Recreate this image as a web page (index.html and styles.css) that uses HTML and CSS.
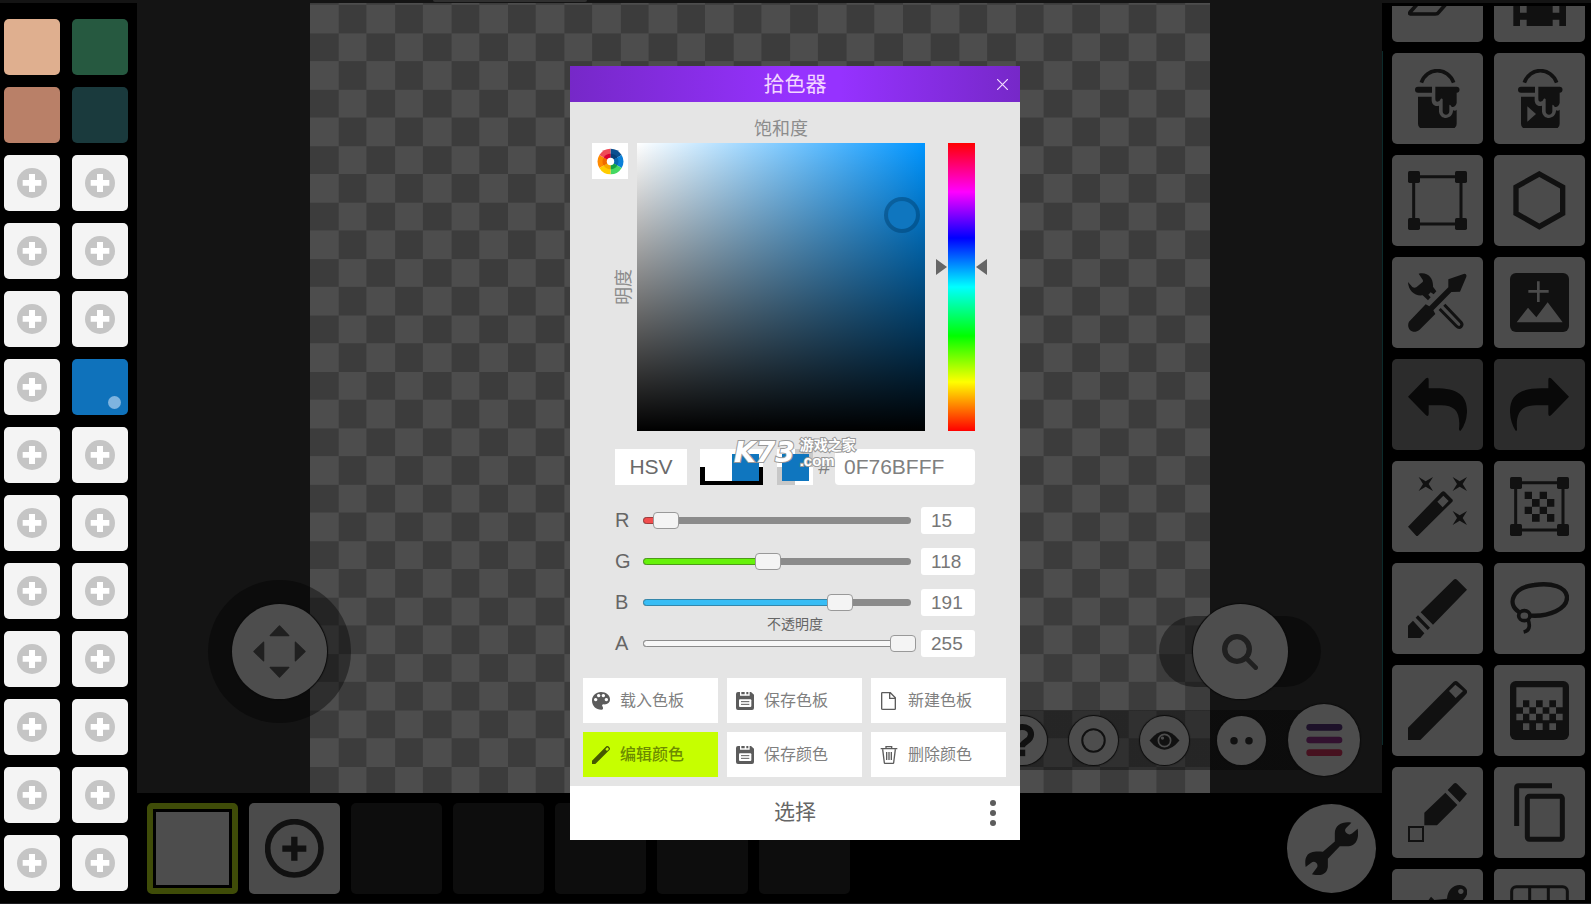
FILE: index.html
```html
<!DOCTYPE html>
<html lang="zh-CN">
<head>
<meta charset="utf-8">
<title>拾色器</title>
<link rel="stylesheet" href="styles.css">
</head>
<body>
<svg class="defs" aria-hidden="true">
  <symbol id="plus" viewBox="0 0 90 90"><circle cx="45" cy="45" r="45" fill="#c5c5c5"/><path d="M36 18h18v18h19v17H54v19H36V53H17V36h19z" fill="#fff"/></symbol>
  <symbol id="corners" viewBox="0 0 177 177"><path d="M17 17h142v142H17z" fill="none" stroke="#111" stroke-width="9"/><g fill="#111"><rect width="36" height="36" rx="5"/><rect x="141" width="36" height="36" rx="5"/><rect y="141" width="36" height="36" rx="5"/><rect x="141" y="141" width="36" height="36" rx="5"/></g></symbol>
  <symbol id="bucket" viewBox="0 0 177 177"><path d="M40 41C56-7 120-7 137 41" fill="none" stroke="#111" stroke-width="11"/><path d="M30 53h42v18H30a9 9 0 0 1 0-18z"/><path d="M82 53h63a9 9 0 0 1 1 18v31c-3 14-15 14-17 9-3-5-5-4-5 0v16c0 14-20 14-20 0V91c-2-4-6-3-8 3-7 8-14 4-14-4z"/><path d="M30 83h41v12c2 14 12 18 22 15v18c4 27 42 24 42-4 5 2 9 1 11-2v42q0 15-15 15H45q-15 0-15-15z"/></symbol>
  <symbol id="floppy" viewBox="0 0 54 54"><path d="M6 0h6v11h29V0h4l9 8v40q0 6-6 6H6q-6 0-6-6V6q0-6 6-6zM16 0h10v7H16zM31 0h6v7h-6z" fill="#5c5c5c"/><rect x="9" y="22" width="37" height="23" rx="3" fill="#fff"/><path d="M15 29h25M15 37h25" stroke="#5c5c5c" stroke-width="3"/></symbol>
</svg>

<div class="app">
  <div class="topline"><span class="tab"></span></div>

  <aside class="palette">
    <button class="swatch peach" aria-label="颜色"></button><button class="swatch green" aria-label="颜色"></button>
    <button class="swatch clay" aria-label="颜色"></button><button class="swatch teal" aria-label="颜色"></button>
    <button class="swatch" aria-label="添加"><svg><use href="#plus"/></svg></button><button class="swatch" aria-label="添加"><svg><use href="#plus"/></svg></button>
    <button class="swatch" aria-label="添加"><svg><use href="#plus"/></svg></button><button class="swatch" aria-label="添加"><svg><use href="#plus"/></svg></button>
    <button class="swatch" aria-label="添加"><svg><use href="#plus"/></svg></button><button class="swatch" aria-label="添加"><svg><use href="#plus"/></svg></button>
    <button class="swatch" aria-label="添加"><svg><use href="#plus"/></svg></button><button class="swatch blue" aria-label="颜色"></button>
    <button class="swatch" aria-label="添加"><svg><use href="#plus"/></svg></button><button class="swatch" aria-label="添加"><svg><use href="#plus"/></svg></button>
    <button class="swatch" aria-label="添加"><svg><use href="#plus"/></svg></button><button class="swatch" aria-label="添加"><svg><use href="#plus"/></svg></button>
    <button class="swatch" aria-label="添加"><svg><use href="#plus"/></svg></button><button class="swatch" aria-label="添加"><svg><use href="#plus"/></svg></button>
    <button class="swatch" aria-label="添加"><svg><use href="#plus"/></svg></button><button class="swatch" aria-label="添加"><svg><use href="#plus"/></svg></button>
    <button class="swatch" aria-label="添加"><svg><use href="#plus"/></svg></button><button class="swatch" aria-label="添加"><svg><use href="#plus"/></svg></button>
    <button class="swatch" aria-label="添加"><svg><use href="#plus"/></svg></button><button class="swatch" aria-label="添加"><svg><use href="#plus"/></svg></button>
    <button class="swatch" aria-label="添加"><svg><use href="#plus"/></svg></button><button class="swatch" aria-label="添加"><svg><use href="#plus"/></svg></button>
  </aside>

  <main class="stage">
    <svg class="canvas" viewBox="0 0 32 28" preserveAspectRatio="xMinYMin slice" shape-rendering="crispEdges">
      <defs><pattern id="checker" y="0.06" width="2" height="2" patternUnits="userSpaceOnUse"><path fill="#4d4d4d" d="M0 0h2v2H0z"/><path fill="#3c3c3c" d="M1 0h1v1H1zM0 1h1v1H0z"/></pattern></defs>
      <rect width="32" height="40" fill="url(#checker)"/>
    </svg>
    <div class="joystick">
      <button class="knob" aria-label="移动"><svg viewBox="0 0 160 160" width="53" height="53" fill="#202020" stroke="#202020" stroke-width="4" stroke-linejoin="round"><path d="M80 3l28 29H52zM80 157l28-29H52zM3 80l29-28v56zM157 80l-29-28v56z"/></svg></button>
    </div>
    <div class="zoombar">
      <button class="knob" aria-label="缩放"><svg viewBox="0 0 108 108" width="36" height="36" fill="none" stroke="#202020"><circle cx="45" cy="45" r="37" stroke-width="16"/><path d="M74 74l27 27" stroke-width="14" stroke-linecap="round"/></svg></button>
    </div>
    <div class="quickbar">
      <button class="round" aria-label="帮助"><svg viewBox="0 0 144 144"><path d="M43 56c0-30 54-32 54-2 0 22-27 20-27 38" fill="none" stroke="#111" stroke-width="18"/><path d="M61 99h19v19H61z" fill="#111"/></svg></button>
      <button class="round" aria-label="圆形"><svg viewBox="0 0 144 144"><circle cx="72" cy="72" r="33" fill="none" stroke="#111" stroke-width="6"/></svg></button>
      <button class="round" aria-label="预览"><svg viewBox="0 0 144 144"><path d="M28 72q44-54 88 0-44 54-88 0z" fill="#111"/><circle cx="72" cy="72" r="18" fill="none" stroke="#4d4d4d" stroke-width="5"/><circle cx="66" cy="65" r="5" fill="#4d4d4d"/></svg></button>
      <button class="round dots" aria-label="更多"><svg viewBox="0 0 144 144" fill="#111"><circle cx="50" cy="73" r="11"/><circle cx="94" cy="73" r="11"/></svg></button>
      <button class="round menu" aria-label="菜单"><svg viewBox="0 0 216 216" stroke-width="20" stroke-linecap="round"><path d="M65 70h88" stroke="#1d1129"/><path d="M65 108h88" stroke="#32112f"/><path d="M65 146h88" stroke="#46111f"/></svg></button>
    </div>
  </main>

  <footer class="frames">
    <button class="frame current" aria-label="帧"></button>
    <button class="frame add" aria-label="添加帧"><svg viewBox="0 0 177 177" width="59" height="59"><circle cx="88" cy="88" r="80" fill="none" stroke="#111" stroke-width="17"/><path d="M88 53v72M52 89h72" stroke="#111" stroke-width="19"/></svg></button>
    <span class="frame"></span><span class="frame"></span><span class="frame"></span><span class="frame"></span><span class="frame"></span>
    <button class="settings" aria-label="设置"><svg viewBox="914 725 160 160" width="53" height="53"><path fill="#111" d="M1054 727c-25-4-50 5-50 33v24l-36 31c-22-2-40-1-48 12-6 9-6 20-4 34l17-13c10-9 25 5 16 16l-14 19c22 5 44 4 48-22v-25l36-38c22 1 42 2 50-15 6-10 6-24 4-38l-17 15c-11 8-28-6-18-17z"/></svg></button>
  </footer>

  <aside class="tools">
    <div class="toolgrid">
      <button class="tool" aria-label="橡皮"><svg viewBox="111 -100 177 177"><path d="M117 36l44-50h86l-44 50q-3 5-10 5h-70q-10 0-6-5z" fill="none" stroke="#111" stroke-width="11"/></svg></button>
      <button class="tool" aria-label="动画"><svg viewBox="417 -100 177 177"><path fill-rule="evenodd" d="M427-100h158V77H427zM447 15v22h20V15zM447 58v20h20V58zM545 15v22h20V15zM545 58v20h20V58zM447-28V-6h20v-22zM545-28V-6h20v-22z"/></svg></button>
      <button class="tool" aria-label="填充"><svg><use href="#bucket"/></svg></button>
      <button class="tool" aria-label="动画填充"><svg viewBox="0 0 177 177"><use href="#bucket" width="177" height="177" x="3"/><path d="M52 112l26 23-26 23z" fill="#4b4b4b"/></svg></button>
      <button class="tool" aria-label="变换"><svg><use href="#corners"/></svg></button>
      <button class="tool" aria-label="形状"><svg viewBox="417 513 177 177"><path d="M505 522l70 39v79l-70 40-70-40v-79z" fill="none" stroke="#111" stroke-width="16"/></svg></button>
      <button class="tool" aria-label="工具"><svg viewBox="111 84 177 177"><path d="M143 86c26-7 45 12 43 39l10 14-8 9-9-6-7 7 7 8-8 9-16-15c-24 3-43-14-44-40l13 15q6 4 12 1l18-15q4-4 0-9z"/><path d="M232 103l48-17q8 0 6 9l-19 45-26 1-54 55 6 11-48 48c-20 15-41-5-31-25l50-52 11 6 57-57z"/><path d="M206 192l50 51q8 8 14 2t0-13l-50-53" fill="none" stroke="#111" stroke-width="9"/></svg></button>
      <button class="tool" aria-label="图片"><svg viewBox="417 84 177 177"><rect x="417" y="84" width="177" height="177" rx="18"/><path d="M437 232l34-44 25 29 34-45 45 60z" fill="#4b4b4b"/><path d="M502 109v62M472 139h61" stroke="#4b4b4b" stroke-width="8"/></svg></button>
      <button class="tool off" aria-label="撤销"><svg viewBox="111 392 177 177"><path d="M111 457l54-55q8-5 8 4v26h20c70 0 96 23 95 72q-2 34-19 55-5 2-5-5c5-50-11-71-54-71h-37v26q-1 9-8 4z"/></svg></button>
      <button class="tool off" aria-label="重做"><svg viewBox="417 392 177 177"><path d="M594 457l-54-55q-8-5-8 4v26h-20c-70 0-96 23-95 72q2 34 17 55 5 2 4-5c-4-50 14-71 57-71h37v26q1 9 8 4z"/></svg></button>
      <button class="tool" aria-label="魔棒"><svg viewBox="111 67 177 177"><path fill-rule="evenodd" d="M111 216L212 112q5-4 10 0l23 23q1 4-1 6L138 246zM217 123l-18 18 16 17 18-19z"/><path d="M143 67l21 13 22-13-13 21 13 21-22-13-21 13 13-21zM245 67l21 13 22-13-13 21 13 21-22-13-21 13 13-21zM245 169l21 13 22-13-13 21 13 21-22-13-21 13 13-21z"/></svg></button>
      <button class="tool" aria-label="选区"><svg viewBox="0 0 177 177"><use href="#corners" width="177" height="177"/><path d="M44 44h22v22H44zM89 44h22v22H89zM66 66h23v23H66zM111 66h22v23h-22zM44 89h22v22H44zM89 89h22v22H89zM66 111h23v23H66zM111 111h22v23h-22z"/></svg></button>
      <button class="tool" aria-label="画笔"><svg viewBox="111 375 177 177"><path d="M248 377q5-4 10 0l30 30-102 105-37-37zM141 484l36 37-7 7-36-37zM126 500l34 38-12 14h-37v-37z"/></svg></button>
      <button class="tool" aria-label="套索"><svg viewBox="417 375 177 177" fill="none"><path d="M444 474c-38-25-18-74 46-81 54-8 94 7 98 35 2 38-55 60-108 57" stroke="#111" stroke-width="13"/><ellipse cx="460" cy="485" rx="17" ry="15" stroke="#111" stroke-width="11"/><path d="M471 496q12 32-13 38" stroke="#111" stroke-width="11"/></svg></button>
      <button class="tool" aria-label="铅笔"><svg viewBox="111 66 177 177"><path fill-rule="evenodd" d="M248 68q7-4 12 0l27 26q3 5-1 10L148 243h-37v-37zM253 77l-19 19 20 21 22-21z"/></svg></button>
      <button class="tool" aria-label="抖动"><svg viewBox="417 66 177 177"><rect x="417" y="66" width="177" height="177" rx="17"/><path fill="#4b4b4b" d="M436 85h139v60h-20v-21h-20v21h-20v-21h-20v21h-20v-21h-19v21h-20zM456 145h19v19h-19zM495 145h20v19h-20zM535 145h20v19h-20zM436 164h20v20h-20zM475 164h20v20h-20zM515 164h20v20h-20zM555 164h20v20h-20zM456 193h19v20h-19zM495 193h20v20h-20zM535 193h20v20h-20z"/></svg></button>
      <button class="tool" aria-label="取色"><svg viewBox="111 372 177 177"><path d="M248 374q5-4 10 0l30 30-22 26-36-37zM223 401l36 37-61 61h-38v-38z"/><path d="M114 504h42v42h-42z" fill="none" stroke="#111" stroke-width="6"/></svg></button>
      <button class="tool" aria-label="复制"><svg viewBox="417 372 177 177" fill="none" stroke="#111" stroke-width="15"><path d="M437 501V386q0-6 6-6h100"/><rect x="469" y="412" width="105" height="129" rx="6"/></svg></button>
      <button class="tool" aria-label="骨骼"><svg viewBox="111 679 177 177"><path fill-rule="evenodd" d="M228 720c2-25 17-41 38-41 24 2 30 24 14 41l-45 50H140l40-56 10 10zM269 690a8 8 0 1 0 1 0z"/></svg></button>
      <button class="tool" aria-label="网格"><svg viewBox="417 679 177 177" fill="none" stroke="#111" stroke-width="9"><rect x="422" y="684" width="167" height="167" rx="14"/><path d="M476 684v167M532 684v167"/></svg></button>
    </div>
  </aside>
</div>

<div class="overlay">
  <section class="dialog" role="dialog" aria-labelledby="title">
    <header class="head">
      <h1 id="title">拾色器</h1>
      <button class="close" aria-label="关闭"><svg viewBox="0 0 11 11" width="11" height="11"><path d="M0 0l11 11M11 0L0 11" stroke="#f3dcff" stroke-width="1.2"/></svg></button>
    </header>
    <div class="body">
      <div class="picker">
        <span class="sat">饱和度</span>
        <div class="side">
          <button class="wheel" aria-label="色轮"><svg viewBox="-40 -40 80 80" width="27" height="27"><path fill="#0b4f8f" d="M0 0V-38A38 38 0 0 1 33-19z"/><path fill="#0a80d8" d="M0 0L33-19A38 38 0 0 1 33 19z"/><path fill="#44d862" d="M0 0L33 19A38 38 0 0 1 0 38z"/><path fill="#ffcc00" d="M0 0V38A38 38 0 0 1-33 19z"/><path fill="#ff8a00" d="M0 0L-33 19A38 38 0 0 1-33-19z"/><path fill="#ef4b56" d="M0 0L-33-19A38 38 0 0 1 0-38z"/><path fill="#063f77" d="M0 0V-23A23 23 0 0 1 20-12z"/><path fill="#0868b0" d="M0 0L20-12A23 23 0 0 1 20 12z"/><path fill="#14a244" d="M0 0L20 12A23 23 0 0 1 0 23z"/><path fill="#f5a800" d="M0 0V23A23 23 0 0 1-20 12z"/><path fill="#f06a00" d="M0 0L-20 12A23 23 0 0 1-20-12z"/><path fill="#dc0032" d="M0 0L-20-12A23 23 0 0 1 0-23z"/><circle r="11" fill="#fff"/></svg></button>
          <span class="val">明度</span>
        </div>
        <div class="field"><span class="ring"></span></div>
        <div class="huebox"><input class="hue" type="range" min="0" max="360" value="206" aria-label="色相"></div>
      </div>

      <div class="coderow">
        <button class="mode">HSV</button>
        <span class="compare"><span class="old"></span><span class="new"></span></span>
        <span class="preview"><span class="new"></span></span>
        <label class="hash" for="hex">#</label>
        <input class="hex" id="hex" type="text" value="0F76BFFF">
      </div>

      <div class="channels">
        <div class="channel"><label for="r">R</label><div class="track"><span class="fill red" style="width:9%"></span><input id="r" type="range" min="0" max="255" value="15"></div><input class="num" type="text" value="15" aria-label="R"></div>
        <div class="channel"><label for="g">G</label><div class="track"><span class="fill lime" style="width:46%"></span><input id="g" type="range" min="0" max="255" value="118"></div><input class="num" type="text" value="118" aria-label="G"></div>
        <div class="channel"><label for="b">B</label><div class="track"><span class="fill sky" style="width:73%"></span><input id="b" type="range" min="0" max="255" value="191"></div><input class="num" type="text" value="191" aria-label="B"></div>
        <div class="channel"><label for="a">A</label><div class="track"><span class="fill clear" style="width:100%"></span><input id="a" type="range" min="0" max="255" value="255"><span class="opacity">不透明度</span></div><input class="num" type="text" value="255" aria-label="A"></div>
      </div>

      <div class="actions">
        <button class="action"><svg viewBox="0 0 54 54"><path fill="#5c5c5c" fill-rule="evenodd" d="M27 0c16 0 27 10 27 22 0 11-8 16-19 15-5 0-6 3-3 7 2 4 2 9-4 9C12 53 0 41 0 26S12 0 27 0zM11 18a5 5 0 1 0 .1 0zM20 6a5 5 0 1 0 .1 0zM34 6a5 5 0 1 0 .1 0zM43 18a5 5 0 1 0 .1 0z"/></svg>载入色板</button>
        <button class="action"><svg><use href="#floppy"/></svg>保存色板</button>
        <button class="action"><svg viewBox="0 0 54 54" fill="none" stroke="#5c5c5c" stroke-width="4"><path d="M7 2h24l15 15v33q0 2-2 2H9q-4 0-4-2V4q0-2 2-2zM29 2v17h17"/></svg>新建色板</button>
        <button class="action on"><svg viewBox="0 0 54 54"><path fill="#455800" fill-rule="evenodd" d="M43 1q3-2 6 0l4 4q2 3 0 6L10 54H0V44zM46 4l-6 6 5 5 6-6z"/></svg>编辑颜色</button>
        <button class="action"><svg><use href="#floppy"/></svg>保存颜色</button>
        <button class="action"><svg viewBox="0 0 54 54" fill="none" stroke="#5c5c5c" stroke-width="4"><path d="M2 8h50M18 8V2h17v6M8 10l5 40q0 2 2 2h24q2 0 2-2l5-40M20 18v24M27 18v24M34 18v24"/></svg>删除颜色</button>
      </div>
    </div>
    <footer class="foot">
      <button class="choose">选择</button>
      <button class="more" aria-label="更多"><svg viewBox="0 0 6 26" width="6" height="26" fill="#5c5c5c"><circle cx="3" cy="3" r="3"/><circle cx="3" cy="13" r="3"/><circle cx="3" cy="23" r="3"/></svg></button>
    </footer>
    <div class="mark"><span class="logo">K73</span><span class="site"><span>游戏之家</span><span class="com">.com</span></span></div>
  </section>
</div>
</body>
</html>
```
FILE: styles.css
```css
* { box-sizing: border-box; }
body { margin: 0; background: #000; font-family: "Liberation Sans", "Noto Sans CJK SC", sans-serif; color: #666; overflow: hidden; }
button, input { font: inherit; color: inherit; border: 0; padding: 0; margin: 0; background: none; }
button { display: grid; place-items: center; }
svg { display: block; }
.defs { display: none; }

.app { display: grid; grid-template: 3px 1fr 110px / 137px 1fr 209px; height: 100vh; border-bottom: 1px solid #1c1c1f; }
.topline { grid-column: 1 / -1; background: #141414; display: flex; padding-left: 433px; }
.tab { width: 154px; height: 2px; background: #303030; border-radius: 0 0 2px 2px; }

.palette { grid-row: 2 / 4; overflow: hidden; display: grid; grid-template-columns: 56px 56px; grid-auto-rows: 56px; gap: 12px; align-content: start; padding: 16px 0 0 4px; }
.swatch { background: #f4f4f4; border-radius: 5px; position: relative; }
.swatch svg { width: 30px; height: 30px; }
.peach { background: #dfaf8f; }
.green { background: #265940; }
.clay { background: #b98068; }
.teal { background: #1a3a3d; }
.blue { background: #0f72bb; }
.blue::after { content: ""; position: absolute; right: 7px; bottom: 6px; width: 13px; height: 13px; border-radius: 50%; background: #7eb4e0; }

.stage { position: relative; min-height: 0; background: #141414; padding: 0 172px 0 173px; overflow: hidden; }
.canvas { width: 100%; height: 100%; }
.joystick { position: absolute; left: 71px; bottom: 70px; width: 143px; height: 143px; border-radius: 50%; background: rgba(0,0,0,.4); display: grid; place-items: center; }
.knob { width: 95px; height: 95px; flex: none; border-radius: 50%; background: #4d4d4d; box-shadow: 0 0 1px 1px #0a0a0a; }
.zoombar { position: absolute; right: 61px; bottom: 106px; width: 162px; height: 71px; border-radius: 36px; background: rgba(0,0,0,.4); display: flex; align-items: center; justify-content: center; }
.quickbar { position: absolute; right: 22px; bottom: 23px; height: 60px; width: 480px; display: flex; align-items: center; justify-content: flex-end; gap: 22px; background: linear-gradient(to left, transparent 36px, rgba(0,0,0,.38) 36px); }
.round { width: 49px; height: 49px; flex: none; border-radius: 50%; background: #4d4d4d; box-shadow: 0 0 1px 1px #0c0c0c; }
.round svg { width: 100%; height: 100%; }
.dots { margin-left: 6px; }
.menu { width: 72px; height: 72px; }

.frames { grid-column: 2; display: flex; gap: 11px; padding: 10px 6px 10px 10px; align-items: center; }
.frame { width: 91px; height: 91px; border-radius: 5px; background: #0d0d0d; }
.frame.add { background: #4b4b4b; }
.frame.current { background: #4d4d4d; border: 6px solid #3f4c08; box-shadow: inset 0 0 0 3px #000; }
.settings { width: 89px; height: 89px; border-radius: 50%; background: #4d4d4d; margin-left: auto; }

.tools { grid-column: 3; grid-row: 2 / 4; padding: 3px 6px 3px 9px; min-height: 0; background: linear-gradient(#0c2b2b, #0c2b2b) 0 48px / 1px 694px no-repeat; }
.toolgrid { height: 100%; overflow: hidden; display: grid; grid-template-columns: 91px 91px; grid-auto-rows: 91px; gap: 11px; align-content: center; justify-content: end; padding-top: 5px; }
.tool { background: #4b4b4b; border-radius: 5px; fill: #111; }
.tool svg { width: 59px; height: 59px; }
.tool.off { background: #2c2c2c; fill: #090909; }

.overlay { position: fixed; inset: 0; display: grid; place-items: center; padding: 2px 1px 0 0; pointer-events: none; }
.dialog { position: relative; width: 450px; background: #e5e5e5; pointer-events: auto; }
.head { display: grid; place-items: center; height: 36px; background: linear-gradient(to right, #7628c8, #9632ff 50%, #9632ff 60%, #7628c8); color: #f3d6ff; position: relative; }
.head h1 { margin: 0; font-size: 21px; line-height: 36px; font-weight: 400; }
.close { position: absolute; right: 0; top: 0; width: 36px; height: 36px; }
.picker { display: grid; grid-template: 41px 288px / 45px 288px 50px; padding-left: 22px; }
.sat { grid-area: 1 / 2; text-align: center; font-size: 18px; line-height: 27px; padding-top: 14px; color: #8c8c8c; }
.side { grid-area: 2 / 1; display: grid; }
.wheel { grid-area: 1 / 1; width: 36px; height: 36px; background: #fff; }
.val { grid-area: 1 / 1; place-self: center end; writing-mode: vertical-rl; text-orientation: sideways; transform: rotate(180deg); font-size: 18px; line-height: 26px; color: #8c8c8c; }
.field { grid-area: 2 / 2; position: relative; background: linear-gradient(to top, #000, transparent), linear-gradient(to right, #fff, #0095ff); }
.ring { position: absolute; left: 92%; top: 25%; width: 36px; height: 36px; margin: -18px; border: 4px solid rgba(0,70,120,.55); border-radius: 50%; background: #0f76bf; background-clip: padding-box; }
.huebox { grid-area: 2 / 3; position: relative; margin-left: 23px; width: 27px; }
.hue { appearance: none; writing-mode: vertical-lr; display: block; width: 27px; height: 288px; background: linear-gradient(#f00, #f0f 17%, #00f 33%, #0ff 50%, #0f0 67%, #ff0 83%, #f00); }
.hue::-webkit-slider-thumb { appearance: none; opacity: 0; }
.huebox::before, .huebox::after { content: ""; position: absolute; top: 43%; margin-top: -8px; border: 8px solid transparent; }
.huebox::before { right: 28px; border-left: 11px solid #666; border-right: 0; }
.huebox::after { left: 28px; border-right: 11px solid #666; border-left: 0; }

.coderow { display: flex; height: 36px; margin: 18px 45px 22px; font-size: 21px; }
.mode { width: 72px; background: #fff; color: #6a6a6a; margin-right: 13px; }
.compare { width: 63px; display: flex; align-items: center; justify-content: center; background: linear-gradient(#fff 50%, #000 50%); margin-right: 14px; }
.old, .new { width: 27px; height: 27px; background: #fff; }
.new { background: #0f76bf; }
.preview { width: 36px; display: grid; place-items: center; background: conic-gradient(#c8c8c8 25%, #fff 25% 50%, #c8c8c8 50% 75%, #fff 75%); }
.hash { width: 22px; line-height: 36px; text-align: center; color: #808080; }
.hex { flex: 1; min-width: 0; padding-left: 9px; border-radius: 4px; background: #fff; color: #808080; }

.channels { display: grid; gap: 14px; margin: 0 45px 21px; }
.channel { display: grid; grid-template-columns: 28px 1fr 54px; height: 27px; align-items: center; font-size: 20px; }
.channel label { line-height: 27px; }
.track { position: relative; height: 7px; margin-right: 10px; border-radius: 4px; background: #8b8b8b; }
.fill { display: block; height: 7px; border: 1px solid; border-radius: 4px; }
.red { background: #f24d4d; border-color: #a03c3c; }
.lime { background: #66f20a; border-color: #4c9b18; }
.sky { background: #38bdf5; border-color: #3487ab; }
.clear { background: #f7f7f7; border-color: #8b8b8b; }
.track input { position: absolute; left: -5px; right: -5px; top: -5px; width: 278px; height: 17px; appearance: none; }
.track input::-webkit-slider-thumb { appearance: none; width: 26px; height: 17px; background: #f4f4f4; border: 1px solid #999; border-radius: 4px; }
.opacity { position: absolute; left: 0; right: 0; bottom: 15px; padding-left: 36px; text-align: center; font-size: 14px; line-height: 16px; }
.num { width: 54px; height: 27px; padding-left: 10px; border-radius: 3px; background: #fff; font-size: 19px; color: #777; }

.actions { display: grid; grid-template-columns: repeat(3, 1fr); gap: 9px; padding: 0 14px 9px 13px; }
.action { display: flex; align-items: center; gap: 10px; height: 45px; padding-left: 9px; background: #fff; font-size: 16px; line-height: 24px; color: #808080; }
.action.on { background: #c6ff00; color: #6c8b00; font-weight: 500; }
.action svg { width: 18px; height: 18px; }
.foot { position: relative; height: 54px; background: #fff; display: grid; }
.choose { font-size: 21px; line-height: 52px; color: #666; align-items: start; }
.more { position: absolute; right: 15px; top: 0; width: 24px; height: 54px; }

.mark { position: absolute; left: 164px; top: 371px; display: flex; gap: 5px; color: #fff; -webkit-text-stroke: 2px #999; paint-order: stroke fill; font-weight: 700; pointer-events: none; }
.logo { font: italic 700 28px/32px "DejaVu Sans", sans-serif; }
.site { font-size: 14px; line-height: 15px; display: grid; align-content: center; }
.com { font-size: 15px; }
```
